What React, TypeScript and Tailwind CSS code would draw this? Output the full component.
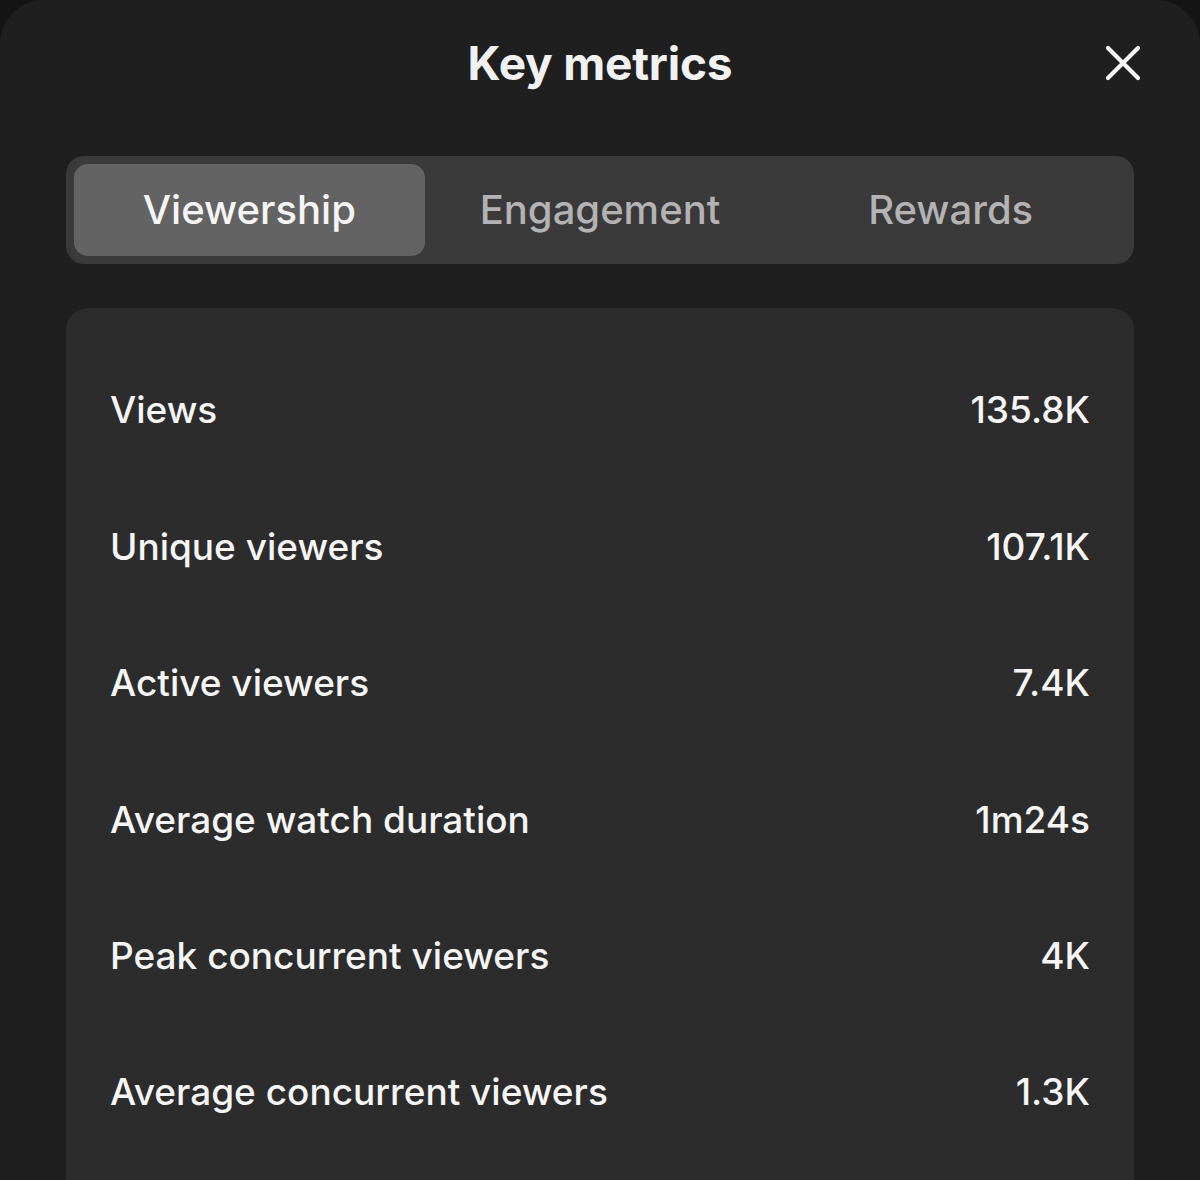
import { useState } from "react";

const tabs = ["Viewership", "Engagement", "Rewards"];

const metrics: [string, string][] = [
  ["Views", "135.8K"],
  ["Unique viewers", "107.1K"],
  ["Active viewers", "7.4K"],
  ["Average watch duration", "1m24s"],
  ["Peak concurrent viewers", "4K"],
  ["Average concurrent viewers", "1.3K"],
];

export default function App() {
  const [active, setActive] = useState(0);

  return (
    <div className="h-[1180px] w-full overflow-hidden bg-[#141414] font-['Inter',sans-serif]">
      <div className="h-full rounded-t-[44px] bg-[#1f1f1f] px-[66px]">
        {/* Header */}
        <div className="relative flex h-[126px] items-center justify-center">
          <h1 className="text-[46px] font-bold tracking-[-0.2px] text-[#f2f2f2]">Key metrics</h1>
          <button className="absolute right-[-8px] top-[44px] flex h-[38px] w-[38px] items-center justify-center">
            <svg width="36" height="36" viewBox="0 0 36 36" fill="none">
              <path d="M3 3L33 33M33 3L3 33" stroke="#f5f5f5" strokeWidth="4.2" strokeLinecap="round" />
            </svg>
          </button>
        </div>

        {/* Tabs */}
        <div className="mt-[30px] grid grid-cols-3 rounded-[18px] bg-[#3a3a3a] p-[8px]">
          {tabs.map((t, i) => (
            <button
              key={t}
              onClick={() => setActive(i)}
              className={`flex h-[92px] items-center justify-center rounded-[14px] text-[40px] font-medium ${
                active === i ? "bg-[#636363] text-[#f5f5f5]" : "text-[#b3b3b3]"
              }`}
            >
              {t}
            </button>
          ))}
        </div>

        {/* Metrics card */}
        <div className="mt-[44px] rounded-[22px] bg-[#2c2c2c] px-[44px] pt-[34px] pb-[40px]">
          {metrics.map(([label, value]) => (
            <div key={label} className="flex h-[136.4px] items-center justify-between text-[37px] font-medium text-[#f5f5f5]">
              <span>{label}</span>
              <span>{value}</span>
            </div>
          ))}
        </div>
      </div>
    </div>
  );
}
